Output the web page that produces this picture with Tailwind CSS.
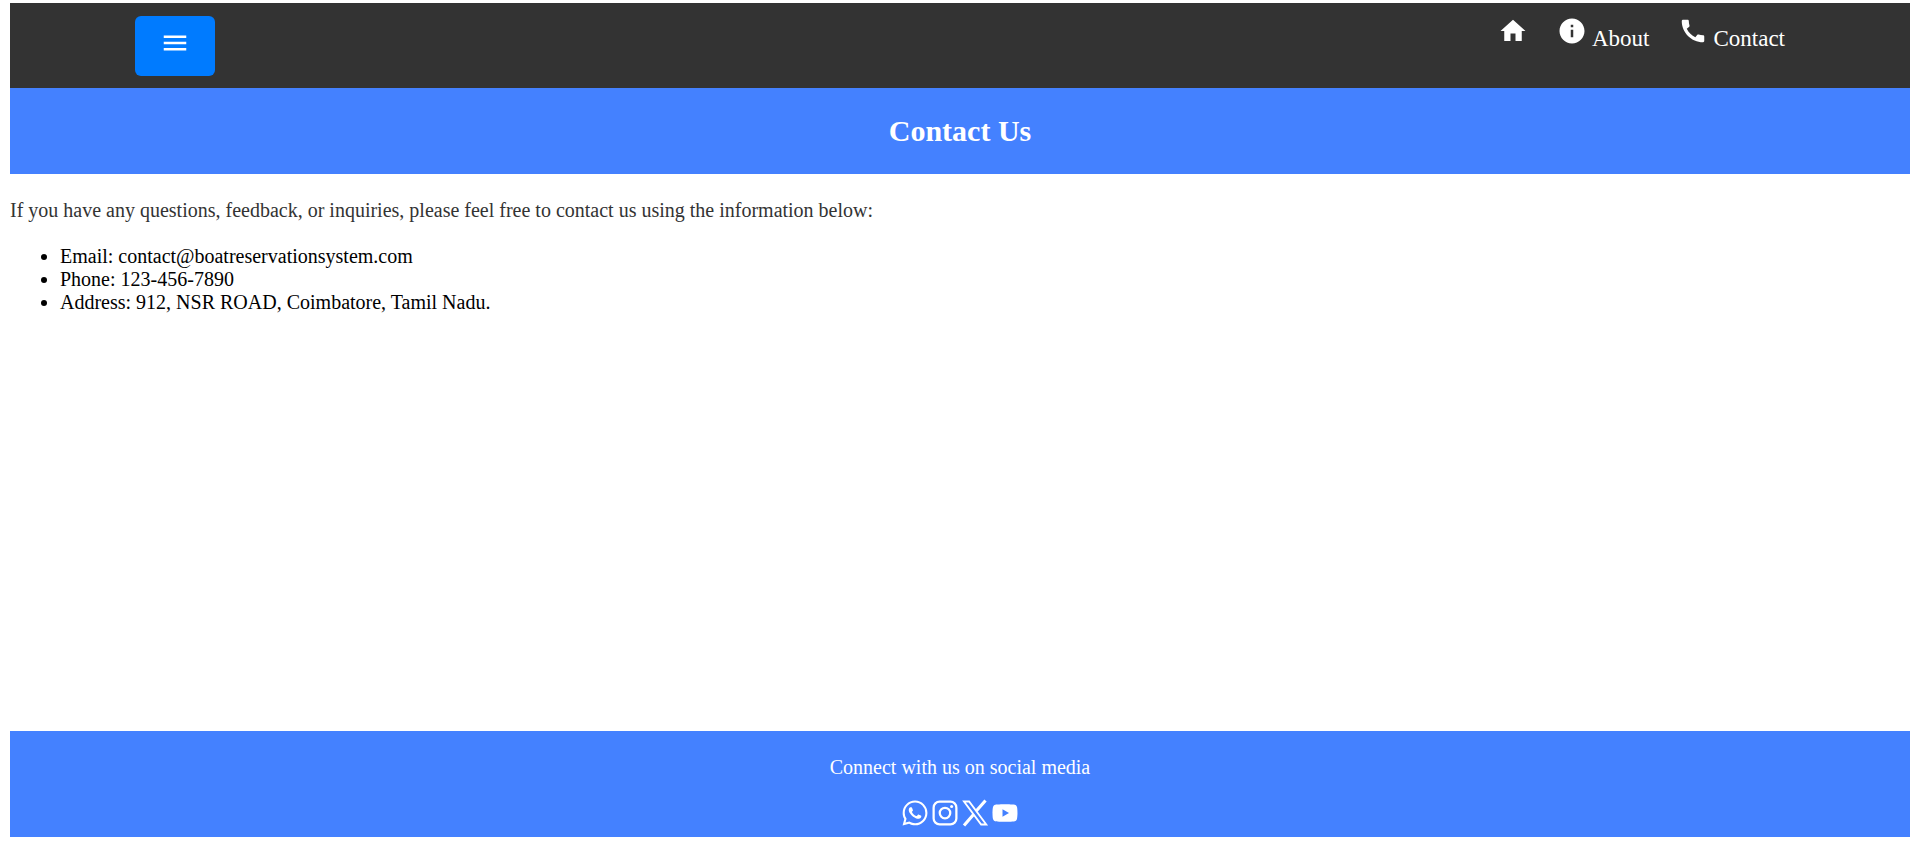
<!DOCTYPE html>
<html lang="en">
<head>
<meta charset="utf-8">
<title>Contact Us</title>
<script src="https://cdn.jsdelivr.net/npm/@tailwindcss/browser@4"></script>
</head>
<body class="flex min-h-screen flex-col bg-white pt-[3px] pr-[5px] pb-[15px] pl-[10px] font-['Liberation_Serif',serif] text-xl leading-[23px] text-black">
  <nav class="flex items-start justify-between bg-[#333333] px-[125px] pt-[13px] pb-3 text-[23px] leading-[30px] text-white">
    <button type="button" aria-label="Menu" class="flex h-[60px] w-20 justify-center rounded-md bg-[#007bff] pt-3">
      <svg class="size-[30px]" viewBox="0 0 24 24" fill="currentColor" aria-hidden="true"><path d="M3 18h18v-2H3v2zm0-5h18v-2H3v2zm0-7v2h18V6H3z"/></svg>
    </button>
    <div class="flex gap-[29px]">
      <a href="#" aria-label="Home"><svg class="size-[30px]" viewBox="0 0 24 24" fill="currentColor" aria-hidden="true"><path d="M10 20v-6h4v6h5v-8h3L12 3 2 12h3v8z"/></svg></a>
      <a href="#" class="flex items-baseline gap-[5px]"><svg class="size-[30px]" viewBox="0 0 24 24" fill="currentColor" aria-hidden="true"><path d="M12 2C6.48 2 2 6.48 2 12s4.48 10 10 10 10-4.48 10-10S17.52 2 12 2zm1 15h-2v-6h2v6zm0-8h-2V7h2v2z"/></svg>About</a>
      <a href="#" class="flex items-baseline gap-[5px]"><svg class="size-[30px]" viewBox="0 0 24 24" fill="currentColor" aria-hidden="true"><path d="M20.01 15.38c-1.23 0-2.42-.2-3.53-.56-.35-.12-.74-.03-1.01.24l-1.57 1.97c-2.83-1.35-5.48-3.9-6.89-6.83l1.95-1.66c.27-.28.35-.67.24-1.02-.37-1.11-.56-2.3-.56-3.53 0-.54-.45-.99-.99-.99H4.19C3.65 3 3 3.24 3 3.99 3 13.28 10.73 21 20.01 21c.71 0 .99-.63.99-1.18v-3.45c0-.54-.45-.99-.99-.99z"/></svg>Contact</a>
    </div>
  </nav>
  <header class="bg-[#4481ff] py-[25px] text-center text-white">
    <h1 class="text-3xl leading-9 font-bold">Contact Us</h1>
  </header>
  <main class="flex-1">
    <p class="mt-[25px] text-[#333333]">If you have any questions, feedback, or inquiries, please feel free to contact us using the information below:</p>
    <ul class="mt-[23px] list-disc pl-[50px]">
      <li>Email: contact@boatreservationsystem.com</li>
      <li>Phone: 123-456-7890</li>
      <li>Address: 912, NSR ROAD, Coimbatore, Tamil Nadu.</li>
    </ul>
  </main>
  <footer class="bg-[#4481ff] pt-[25px] pb-[9px] text-center text-white">
    <p>Connect with us on social media</p>
    <div class="mt-[19px] flex justify-center">
      <a href="#" aria-label="WhatsApp"><svg class="size-[30px]" viewBox="0 0 24 24" fill="currentColor" aria-hidden="true"><path d="M19.05 4.91A9.816 9.816 0 0 0 12.04 2c-5.46 0-9.91 4.45-9.91 9.91 0 1.75.46 3.45 1.32 4.95L2.05 22l5.25-1.38c1.45.79 3.08 1.21 4.74 1.21 5.46 0 9.91-4.45 9.91-9.91 0-2.65-1.03-5.14-2.9-7.01zm-7.01 15.24c-1.48 0-2.93-.4-4.2-1.15l-.3-.18-3.12.82.83-3.04-.2-.31a8.264 8.264 0 0 1-1.26-4.38c0-4.54 3.7-8.24 8.24-8.24 2.2 0 4.27.86 5.82 2.42a8.183 8.183 0 0 1 2.41 5.83c.02 4.54-3.68 8.23-8.22 8.23zm4.52-6.16c-.25-.12-1.47-.72-1.69-.81-.23-.08-.39-.12-.56.12-.17.25-.64.81-.78.97-.14.17-.29.19-.54.06-.25-.12-1.05-.39-1.99-1.23-.74-.66-1.23-1.47-1.38-1.72-.14-.25-.02-.38.11-.51.11-.11.25-.29.37-.43s.17-.25.25-.41c.08-.17.04-.31-.02-.43s-.56-1.34-.76-1.84c-.2-.48-.41-.42-.56-.43h-.48c-.17 0-.43.06-.66.31-.22.25-.86.85-.86 2.07s.89 2.4 1.01 2.56c.12.17 1.75 2.67 4.23 3.74.59.26 1.05.41 1.41.52.59.19 1.13.16 1.56.1.48-.07 1.47-.6 1.67-1.18.21-.58.21-1.07.14-1.18s-.22-.16-.47-.28z"/></svg></a>
      <a href="#" aria-label="Instagram"><svg class="size-[30px]" viewBox="0 0 24 24" fill="none" stroke="currentColor" stroke-width="1.8" aria-hidden="true"><rect x="2.9" y="2.9" width="18.2" height="18.2" rx="4.8"/><circle cx="12" cy="12" r="4.2"/><circle cx="17.3" cy="6.7" r="1.2" fill="currentColor" stroke="none"/></svg></a>
      <a href="#" aria-label="X"><svg class="size-[30px]" viewBox="0 0 24 24" fill="none" stroke="currentColor" aria-hidden="true"><path stroke-width="1.5" d="M3.2 2.8h4.1L21 21.2h-4.1z"/><path stroke-width="2.5" d="M20.4 2 13 10.4M11 13 3.2 22"/></svg></a>
      <a href="#" aria-label="YouTube"><svg class="size-[30px]" viewBox="0 0 24 24" fill="currentColor" aria-hidden="true"><path d="M21.58 7.19c-.23-.86-.91-1.54-1.77-1.77C18.25 5 12 5 12 5s-6.25 0-7.81.42c-.86.23-1.54.91-1.77 1.77C2 8.75 2 12 2 12s0 3.25.42 4.81c.23.86.91 1.54 1.77 1.77C5.75 19 12 19 12 19s6.25 0 7.81-.42c.86-.23 1.54-.91 1.77-1.77C22 15.25 22 12 22 12s0-3.25-.42-4.81zM10 15V9l5.2 3-5.2 3z"/></svg></a>
    </div>
  </footer>
</body>
</html>
